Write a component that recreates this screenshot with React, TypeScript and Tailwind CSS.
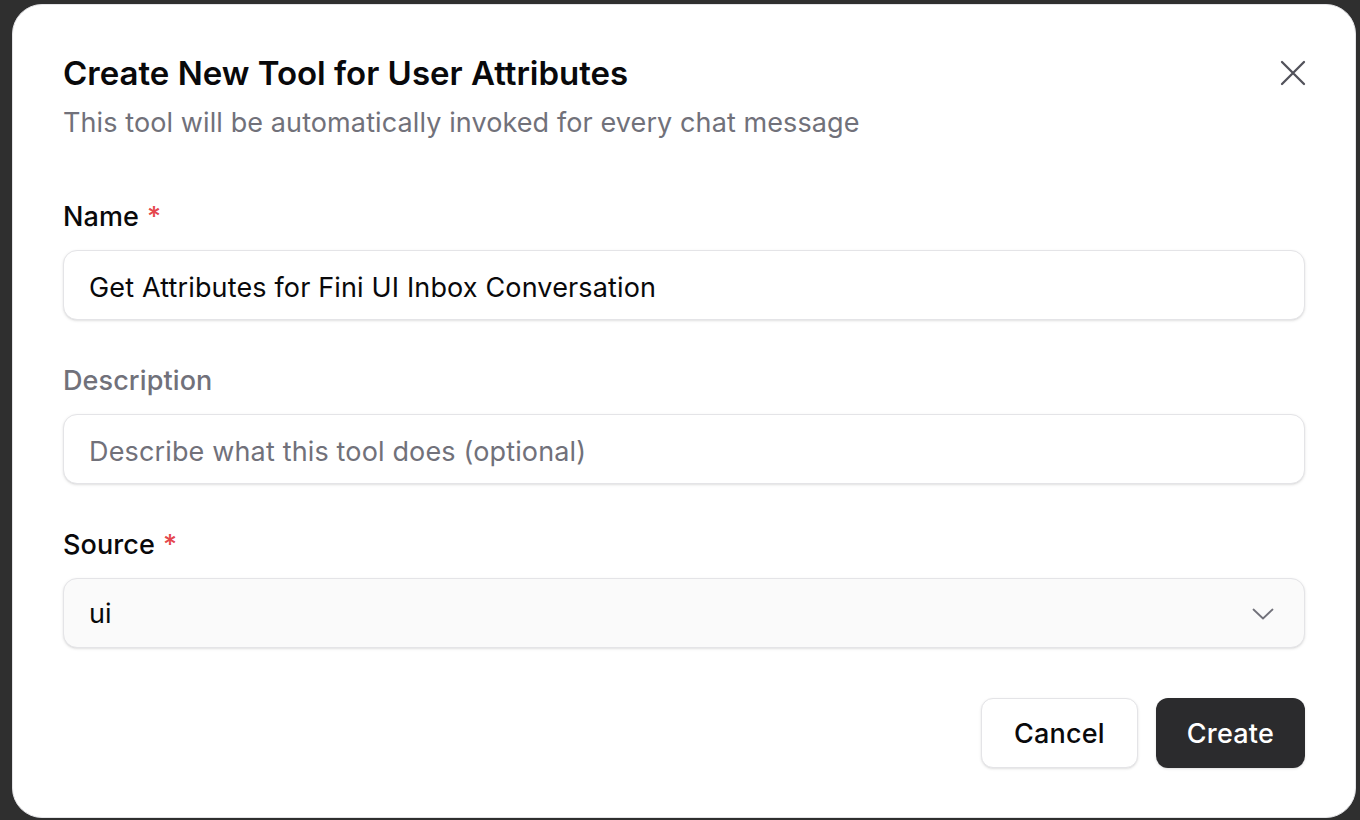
import React from 'react';

export default function App() {
    return (
        <div
            className="h-screen w-full bg-[#2f2f2f] pt-[4px] pr-[4px] pb-[2px] pl-[12px]"
            style={{ fontFamily: 'Inter, "Noto Sans", sans-serif' }}
        >
            <div className="flex h-full flex-col rounded-[30px] border border-[#e4e4e7] bg-white px-[50px] pt-[48px] pb-[48px]">
                <header className="flex items-start justify-between">
                    <div>
                        <h2 className="text-[33px] leading-[40px] font-semibold text-[#09090b]">
                            Create New Tool for User Attributes
                        </h2>
                        <p className="mt-[12px] text-[27px] leading-[36px] tracking-[0.1px] text-[#71717a]">
                            This tool will be automatically invoked for every chat message
                        </p>
                    </div>
                    <button type="button" className="mt-[7px] -mr-[1px] text-[#52525b]" aria-label="Close">
                        <svg width="26" height="26" viewBox="0 0 26 26" fill="none" stroke="currentColor" strokeWidth="2.3" strokeLinecap="round">
                            <path d="M2 2L24 24M24 2L2 24" />
                        </svg>
                    </button>
                </header>

                <div className="mt-[57px] flex flex-col gap-[42px]">
                    <Field label="Name" required>
                        <input
                            defaultValue="Get Attributes for Fini UI Inbox Conversation"
                            className="h-[70px] w-full rounded-[14px] border border-[#e4e4e7] bg-white px-[25px] pt-[4px] text-[27px] tracking-[0.15px] text-[#09090b] shadow-sm outline-none"
                        />
                    </Field>

                    <Field label="Description" muted>
                        <input
                            placeholder="Describe what this tool does (optional)"
                            className="h-[70px] w-full rounded-[14px] border border-[#e4e4e7] bg-white px-[25px] pt-[4px] text-[27px] tracking-[0.15px] text-[#09090b] shadow-sm outline-none placeholder:text-[#71717a]"
                        />
                    </Field>

                    <Field label="Source" required>
                        <button
                            type="button"
                            className="flex h-[70px] w-full items-center justify-between rounded-[14px] border border-[#e4e4e7] bg-[#fafafa] pt-[3px] pr-[30px] pl-[25px] text-[27px] text-[#09090b] shadow-sm"
                        >
                            <span>ui</span>
                            <svg width="22" height="12" viewBox="0 0 22 12" fill="none" stroke="#71717a" strokeWidth="1.8" strokeLinecap="round" strokeLinejoin="round" className="-mt-[2px]">
                                <path d="M1.5 1.5L11 10.5L20.5 1.5" />
                            </svg>
                        </button>
                    </Field>
                </div>

                <div className="mt-[50px] flex justify-end gap-[18px]">
                    <button
                        type="button"
                        className="h-[70px] rounded-[12px] border border-[#e4e4e7] bg-white px-[32px] pt-[3px] text-[27px] font-medium tracking-[0.2px] text-[#09090b] shadow-sm"
                    >
                        Cancel
                    </button>
                    <button
                        type="button"
                        className="h-[70px] rounded-[12px] bg-[#2b2b2d] px-[31px] pt-[3px] text-[27px] font-medium tracking-[0.2px] text-white shadow-sm"
                    >
                        Create
                    </button>
                </div>
            </div>
        </div>
    );
}

function Field({
    label,
    required = false,
    muted = false,
    children,
}: {
    label: string;
    required?: boolean;
    muted?: boolean;
    children: React.ReactNode;
}) {
    return (
        <div className="flex flex-col gap-[16px]">
            <label className={`pt-[1px] text-[27px] leading-[35px] font-medium tracking-[0.1px] ${muted ? 'text-[#71717a]' : 'text-[#09090b]'}`}>
                {label}
                {required && <span className="ml-[8px] text-[#e5484d]">*</span>}
            </label>
            {children}
        </div>
    );
}
